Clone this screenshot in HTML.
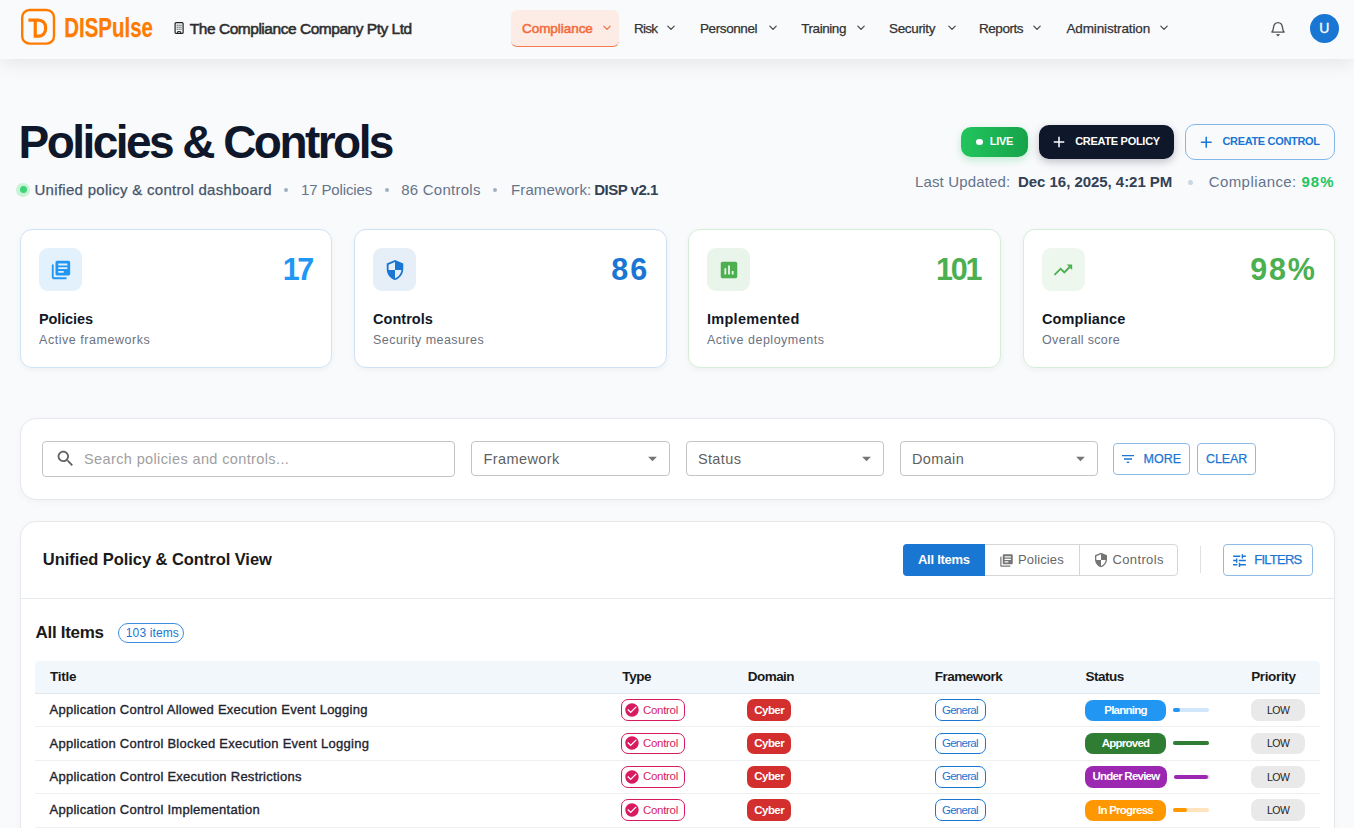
<!DOCTYPE html>
<html><head><meta charset="utf-8"><title>Policies &amp; Controls</title>
<style>
html,body{margin:0;padding:0;}
body{width:1354px;height:828px;overflow:hidden;position:relative;background:#f9fafc;font-family:"Liberation Sans",sans-serif;}
.t{position:absolute;white-space:nowrap;line-height:1;}
.b{position:absolute;box-sizing:border-box;}
.i{position:absolute;overflow:visible;}
</style></head><body>
<div class="b" style="left:0px;top:0px;width:1354.00px;height:59.00px;background:#f9fafc;box-shadow:0 4px 20px rgba(0,0,0,0.09);z-index:1"></div>
<div style="position:absolute;left:0;top:0;width:1354px;height:59px;z-index:2">
<svg class="i" style="left:21px;top:9px;width:35px;height:37px" viewBox="0 0 35 37">
<rect x="1.2" y="1.0" width="31.8" height="33.6" rx="7.4" fill="none" stroke="#ff7b00" stroke-width="2.4"/>
<path d="M7.4 11.05 H17.6 A7 7 0 0 1 24.6 18.05 V20.1 A7 7 0 0 1 17.6 27.1 H14.25 V11.05" fill="none" stroke="#ff7b00" stroke-width="3.2" stroke-linejoin="miter"/>
</svg>
<svg class="i" style="left:63px;top:10px;width:95px;height:34px" viewBox="0 0 95 34"><text x="1.3" y="27.4" font-family="Liberation Sans" font-weight="700" font-size="27.5" fill="#ff7b00" stroke="#ff7b00" stroke-width="0.25" textLength="88.6" lengthAdjust="spacingAndGlyphs">DISPulse</text></svg>
<svg class="i" style="left:174px;top:22px;width:10px;height:12px" viewBox="0 0 10 12">
<rect x="1.1" y="0.6" width="8" height="10.8" rx="1" fill="none" stroke="#222" stroke-width="1.2"/>
<g fill="#333"><circle cx="3.2" cy="3.2" r=".6"/><circle cx="5.1" cy="3.2" r=".6"/><circle cx="7" cy="3.2" r=".6"/>
<circle cx="3.2" cy="5.2" r=".6"/><circle cx="5.1" cy="5.2" r=".6"/><circle cx="7" cy="5.2" r=".6"/>
<circle cx="3.2" cy="7.2" r=".6"/><circle cx="5.1" cy="7.2" r=".6"/><circle cx="7" cy="7.2" r=".6"/></g>
<path d="M3.6 11 V9.6 H6.6 V11" fill="none" stroke="#222" stroke-width="1"/>
</svg>
<div class="t" style="left:189.80px;top:20.88px;font-size:15.5px;font-weight:400;color:#2e2e2e;letter-spacing:-0.47px;-webkit-text-stroke:0.55px currentColor;">The Compliance Company Pty Ltd</div>
<div class="b" style="left:511px;top:10px;width:108.00px;height:37.00px;background:#fdece6;border-bottom:1.5px solid #f57c4f;border-radius:6px"></div>
<div class="t" style="left:522.00px;top:21.76px;font-size:13.5px;font-weight:400;color:#f26d3d;letter-spacing:-0.05px;-webkit-text-stroke:0.55px currentColor;">Compliance</div>
<svg class="i" style="left:602.5px;top:25px;width:8px;height:6px" viewBox="0 0 8 6"><path d="M0.8 1.2 L4 4.4 L7.2 1.2" fill="none" stroke="#f26d3d" stroke-width="1.2" stroke-linecap="round" stroke-linejoin="round"/></svg>
<div class="t" style="left:634.00px;top:21.76px;font-size:13.5px;font-weight:400;color:#333;letter-spacing:-0.75px;-webkit-text-stroke:0.25px currentColor;">Risk</div>
<svg class="i" style="left:667.1px;top:25px;width:8px;height:6px" viewBox="0 0 8 6"><path d="M0.8 1.2 L4 4.4 L7.2 1.2" fill="none" stroke="#444" stroke-width="1.2" stroke-linecap="round" stroke-linejoin="round"/></svg>
<div class="t" style="left:700.00px;top:21.76px;font-size:13.5px;font-weight:400;color:#333;letter-spacing:-0.4px;-webkit-text-stroke:0.25px currentColor;">Personnel</div>
<svg class="i" style="left:768.8px;top:25px;width:8px;height:6px" viewBox="0 0 8 6"><path d="M0.8 1.2 L4 4.4 L7.2 1.2" fill="none" stroke="#444" stroke-width="1.2" stroke-linecap="round" stroke-linejoin="round"/></svg>
<div class="t" style="left:801.20px;top:21.76px;font-size:13.5px;font-weight:400;color:#333;letter-spacing:-0.43px;-webkit-text-stroke:0.25px currentColor;">Training</div>
<svg class="i" style="left:856.8px;top:25px;width:8px;height:6px" viewBox="0 0 8 6"><path d="M0.8 1.2 L4 4.4 L7.2 1.2" fill="none" stroke="#444" stroke-width="1.2" stroke-linecap="round" stroke-linejoin="round"/></svg>
<div class="t" style="left:889.00px;top:21.76px;font-size:13.5px;font-weight:400;color:#333;letter-spacing:-0.33px;-webkit-text-stroke:0.25px currentColor;">Security</div>
<svg class="i" style="left:947.5px;top:25px;width:8px;height:6px" viewBox="0 0 8 6"><path d="M0.8 1.2 L4 4.4 L7.2 1.2" fill="none" stroke="#444" stroke-width="1.2" stroke-linecap="round" stroke-linejoin="round"/></svg>
<div class="t" style="left:979.00px;top:21.76px;font-size:13.5px;font-weight:400;color:#333;letter-spacing:-0.45px;-webkit-text-stroke:0.25px currentColor;">Reports</div>
<svg class="i" style="left:1033.3px;top:25px;width:8px;height:6px" viewBox="0 0 8 6"><path d="M0.8 1.2 L4 4.4 L7.2 1.2" fill="none" stroke="#444" stroke-width="1.2" stroke-linecap="round" stroke-linejoin="round"/></svg>
<div class="t" style="left:1066.40px;top:21.76px;font-size:13.5px;font-weight:400;color:#333;letter-spacing:-0.13px;-webkit-text-stroke:0.25px currentColor;">Administration</div>
<svg class="i" style="left:1159.5px;top:25px;width:8px;height:6px" viewBox="0 0 8 6"><path d="M0.8 1.2 L4 4.4 L7.2 1.2" fill="none" stroke="#444" stroke-width="1.2" stroke-linecap="round" stroke-linejoin="round"/></svg>
<svg class="i" style="left:1270px;top:20px;width:16px;height:18px" viewBox="0 0 16 18">
<path d="M1.9 12.1 C2.9 11.3 3.2 10 3.4 8 C3.7 4.5 5.3 2.6 8 2.6 C10.7 2.6 12.3 4.5 12.6 8 C12.8 10 13.1 11.3 14.1 12.1 Z" fill="none" stroke="#555" stroke-width="1.4" stroke-linejoin="round"/>
<path d="M6.9 14.6 L8 15.6 L9.1 14.6" fill="none" stroke="#555" stroke-width="1.3" stroke-linecap="round"/>
</svg>
<div class="b" style="left:1309.5px;top:13.5px;width:29.00px;height:29.00px;background:#1976d2;border-radius:50%"></div>
<div class="t" style="left:1319.30px;top:21.24px;font-size:14px;font-weight:400;color:#fff;-webkit-text-stroke:0.35px #fff;">U</div>
</div>
<div class="t" style="left:18.60px;top:118.66px;font-size:46px;font-weight:700;color:#0f172a;letter-spacing:-2.55px;">Policies &amp; Controls</div>
<div class="b" style="left:16.3px;top:182.5px;width:14.00px;height:14.00px;background:#c9f3d5;border-radius:50%"></div>
<div class="b" style="left:19.8px;top:186px;width:7.00px;height:7.00px;background:#3fd47a;border-radius:50%"></div>
<div class="t" style="left:34.50px;top:182.30px;font-size:15px;font-weight:400;color:#475569;letter-spacing:0.29px;-webkit-text-stroke:0.25px currentColor;">Unified policy &amp; control dashboard</div>
<div class="b" style="left:284.3px;top:188px;width:4.00px;height:4.00px;background:#a3afbf;border-radius:50%"></div>
<div class="b" style="left:384.6px;top:188px;width:4.00px;height:4.00px;background:#a3afbf;border-radius:50%"></div>
<div class="b" style="left:493.3px;top:188px;width:4.00px;height:4.00px;background:#a3afbf;border-radius:50%"></div>
<div class="t" style="left:301.00px;top:182.30px;font-size:15px;font-weight:400;color:#64748b;letter-spacing:-0.14px;">17 Policies</div>
<div class="t" style="left:401.20px;top:182.30px;font-size:15px;font-weight:400;color:#64748b;letter-spacing:0.25px;">86 Controls</div>
<div class="t" style="left:511.00px;top:182.30px;font-size:15px;font-weight:400;color:#64748b;letter-spacing:0.12px;">Framework:</div>
<div class="t" style="left:594.20px;top:182.30px;font-size:15px;font-weight:700;color:#334155;letter-spacing:-0.5px;">DISP v2.1</div>
<div class="b" style="left:961px;top:127px;width:67.00px;height:30.00px;background:linear-gradient(90deg,#22c55e,#16a34a);border-radius:10px;box-shadow:0 3px 8px rgba(34,197,94,0.28)"></div>
<div class="b" style="left:976.3px;top:138.8px;width:6.50px;height:6.50px;background:#fff;border-radius:50%"></div>
<div class="t" style="left:989.70px;top:136.06px;font-size:11px;font-weight:700;color:#fff;letter-spacing:-0.25px;">LIVE</div>
<div class="b" style="left:1039px;top:125px;width:135.00px;height:34.00px;background:#0f172a;border-radius:10px;box-shadow:0 3px 8px rgba(15,23,42,0.25)"></div>
<svg class="i" style="left:1049.85px;top:133.15px;width:18px;height:18px" viewBox="0 0 24 24"><path fill="#fff" d="M19 13h-6v6h-2v-6H5v-2h6V5h2v6h6v2z"/></svg>
<div class="t" style="left:1075.20px;top:136.16px;font-size:11px;font-weight:700;color:#fff;letter-spacing:-0.29px;">CREATE POLICY</div>
<div class="b" style="left:1185px;top:124px;width:150.00px;height:36.00px;border:1px solid #85b6ea;border-radius:10px"></div>
<svg class="i" style="left:1196.75px;top:132.75px;width:18.5px;height:18.5px" viewBox="0 0 24 24"><path fill="#1976d2" d="M19 13h-6v6h-2v-6H5v-2h6V5h2v6h6v2z"/></svg>
<div class="t" style="left:1222.50px;top:136.06px;font-size:11px;font-weight:700;color:#1976d2;letter-spacing:-0.34px;">CREATE CONTROL</div>
<div class="t" style="left:915.00px;top:174.10px;font-size:15px;font-weight:400;color:#64748b;letter-spacing:0.14px;">Last Updated:</div>
<div class="t" style="left:1018.00px;top:174.10px;font-size:15px;font-weight:700;color:#334155;letter-spacing:-0.04px;">Dec 16, 2025, 4:21 PM</div>
<div class="b" style="left:1187.7px;top:179.8px;width:5.00px;height:5.00px;background:#cbd5e1;border-radius:50%"></div>
<div class="t" style="left:1208.70px;top:174.10px;font-size:15px;font-weight:400;color:#64748b;letter-spacing:0.42px;">Compliance:</div>
<div class="t" style="left:1301.50px;top:174.10px;font-size:15px;font-weight:700;color:#22c55e;letter-spacing:1.0px;">98%</div>
<div class="b" style="left:20px;top:229px;width:312.00px;height:139.00px;background:#fff;border:1px solid #cfe4f8;border-radius:12px;box-shadow:0 2px 6px rgba(0,0,0,0.045)"></div>
<div class="b" style="left:39px;top:248px;width:43.00px;height:43.00px;background:#e3f1fd;border-radius:9px"></div>
<svg class="i" style="left:49.50px;top:258.50px;width:22px;height:22px" viewBox="0 0 24 24"><path fill="#2196f3" d="M4 6H2v14c0 1.1.9 2 2 2h14v-2H4V6zm16-4H8c-1.1 0-2 .9-2 2v12c0 1.1.9 2 2 2h12c1.1 0 2-.9 2-2V4c0-1.1-.9-2-2-2zm-1 9H9V9h10v2zm-4 4H9v-2h6v2zm4-8H9V5h10v2z"/></svg>
<div class="t" style="right:1039.90px;top:254.38px;font-size:30.5px;font-weight:700;color:#2196f3;letter-spacing:-2.6px;margin-right:2.6px">17</div>
<div class="t" style="left:39.00px;top:311.72px;font-size:14.5px;font-weight:700;color:#111827;letter-spacing:-0.12px;">Policies</div>
<div class="t" style="left:39.00px;top:333.80px;font-size:12.5px;font-weight:400;color:#6b7280;letter-spacing:0.54px;">Active frameworks</div>
<div class="b" style="left:354px;top:229px;width:313.00px;height:139.00px;background:#fff;border:1px solid #cfe0f3;border-radius:12px;box-shadow:0 2px 6px rgba(0,0,0,0.045)"></div>
<div class="b" style="left:373px;top:248px;width:43.00px;height:43.00px;background:#e6eef8;border-radius:9px"></div>
<svg class="i" style="left:383.50px;top:258.50px;width:22px;height:22px" viewBox="0 0 24 24"><path fill="#1976d2" d="M12 1 3 5v6c0 5.55 3.84 10.74 9 12 5.16-1.26 9-6.45 9-12V5l-9-4zm0 10.99h7c-.53 4.12-3.28 7.79-7 8.94V12H5V6.3l7-3.11v8.8z"/></svg>
<div class="t" style="right:706.70px;top:254.38px;font-size:30.5px;font-weight:700;color:#1976d2;letter-spacing:2.2px;margin-right:-2.2px">86</div>
<div class="t" style="left:373.00px;top:311.72px;font-size:14.5px;font-weight:700;color:#111827;letter-spacing:0.04px;">Controls</div>
<div class="t" style="left:373.00px;top:333.80px;font-size:12.5px;font-weight:400;color:#6b7280;letter-spacing:0.45px;">Security measures</div>
<div class="b" style="left:688px;top:229px;width:313.00px;height:139.00px;background:#fff;border:1px solid #d6edd7;border-radius:12px;box-shadow:0 2px 6px rgba(0,0,0,0.045)"></div>
<div class="b" style="left:707px;top:248px;width:43.00px;height:43.00px;background:#e9f5ea;border-radius:9px"></div>
<svg class="i" style="left:717.50px;top:258.50px;width:22px;height:22px" viewBox="0 0 24 24"><path fill="#4caf50" d="M19 3H5c-1.1 0-2 .9-2 2v14c0 1.1.9 2 2 2h14c1.1 0 2-.9 2-2V5c0-1.1-.9-2-2-2zM9 17H7v-7h2v7zm4 0h-2V7h2v10zm4 0h-2v-4h2v4z"/></svg>
<div class="t" style="right:371.60px;top:254.38px;font-size:30.5px;font-weight:700;color:#4caf50;letter-spacing:-2.3px;margin-right:2.3px">101</div>
<div class="t" style="left:707.00px;top:311.72px;font-size:14.5px;font-weight:700;color:#111827;letter-spacing:0.28px;">Implemented</div>
<div class="t" style="left:707.00px;top:333.80px;font-size:12.5px;font-weight:400;color:#6b7280;letter-spacing:0.5px;">Active deployments</div>
<div class="b" style="left:1023px;top:229px;width:312.00px;height:139.00px;background:#fff;border:1px solid #d6edd7;border-radius:12px;box-shadow:0 2px 6px rgba(0,0,0,0.045)"></div>
<div class="b" style="left:1042px;top:248px;width:43.00px;height:43.00px;background:#edf7ee;border-radius:9px"></div>
<svg class="i" style="left:1051.50px;top:258.50px;width:22px;height:22px" viewBox="0 0 24 24"><path fill="#4caf50" d="M16 6l2.29 2.29-4.88 4.88-4-4L2 16.59 3.41 18l6-6 4 4 6.3-6.29L22 12V6z"/></svg>
<div class="t" style="right:39.00px;top:254.38px;font-size:30.5px;font-weight:700;color:#4caf50;letter-spacing:1.8px;margin-right:-1.8px">98%</div>
<div class="t" style="left:1042.00px;top:311.72px;font-size:14.5px;font-weight:700;color:#111827;letter-spacing:0.12px;">Compliance</div>
<div class="t" style="left:1042.00px;top:333.80px;font-size:12.5px;font-weight:400;color:#6b7280;letter-spacing:0.33px;">Overall score</div>
<div class="b" style="left:20px;top:418px;width:1315.00px;height:82.00px;background:#fff;border:1px solid #e6e8eb;border-radius:16px;box-shadow:0 2px 6px rgba(0,0,0,0.035)"></div>
<div class="b" style="left:42.2px;top:441.1px;width:413.30px;height:35.60px;border:1px solid #c4c4c4;border-radius:4px"></div>
<svg class="i" style="left:55.00px;top:448.00px;width:21px;height:21px" viewBox="0 0 24 24"><path fill="#616161" d="M15.5 14h-.79l-.28-.27C15.41 12.59 16 11.11 16 9.5 16 5.91 13.09 3 9.5 3S3 5.91 3 9.5 5.91 16 9.5 16c1.61 0 3.09-.59 4.23-1.57l.27.28v.79l5 4.99L20.49 19l-4.99-5zm-6 0C7.01 14 5 11.99 5 9.5S7.01 5 9.5 5 14 7.01 14 9.5 11.99 14 9.5 14z"/></svg>
<div class="t" style="left:84.00px;top:451.52px;font-size:14.5px;font-weight:400;color:#a0a0a0;letter-spacing:0.38px;">Search policies and controls...</div>
<div class="b" style="left:471.2px;top:441.2px;width:198.50px;height:35.20px;border:1px solid #c4c4c4;border-radius:4px"></div>
<div class="t" style="left:483.60px;top:451.52px;font-size:14.5px;font-weight:400;color:#5f5f5f;letter-spacing:0.38px;">Framework</div>
<svg class="i" style="left:642.15px;top:448.30px;width:21px;height:21px" viewBox="0 0 24 24"><path fill="#757575" d="M7 10l5 5 5-5z"/></svg>
<div class="b" style="left:685.5px;top:441.2px;width:198.50px;height:35.20px;border:1px solid #c4c4c4;border-radius:4px"></div>
<div class="t" style="left:697.90px;top:451.52px;font-size:14.5px;font-weight:400;color:#5f5f5f;letter-spacing:0.38px;">Status</div>
<svg class="i" style="left:856.45px;top:448.30px;width:21px;height:21px" viewBox="0 0 24 24"><path fill="#757575" d="M7 10l5 5 5-5z"/></svg>
<div class="b" style="left:899.5px;top:441.2px;width:198.50px;height:35.20px;border:1px solid #c4c4c4;border-radius:4px"></div>
<div class="t" style="left:911.90px;top:451.52px;font-size:14.5px;font-weight:400;color:#5f5f5f;letter-spacing:0.38px;">Domain</div>
<svg class="i" style="left:1070.45px;top:448.30px;width:21px;height:21px" viewBox="0 0 24 24"><path fill="#757575" d="M7 10l5 5 5-5z"/></svg>
<div class="b" style="left:1113.2px;top:443.3px;width:76.40px;height:31.30px;border:1px solid #8fbbe8;border-radius:4px"></div>
<svg class="i" style="left:1120.10px;top:450.90px;width:16px;height:16px" viewBox="0 0 24 24"><path fill="#1976d2" d="M10 18h4v-2h-4v2zM3 6v2h18V6H3zm3 7h12v-2H6v2z"/></svg>
<div class="t" style="left:1143.50px;top:453.10px;font-size:12.5px;font-weight:400;color:#1976d2;-webkit-text-stroke:0.25px currentColor;">MORE</div>
<div class="b" style="left:1197.4px;top:443.3px;width:58.40px;height:31.30px;border:1px solid #8fbbe8;border-radius:4px"></div>
<div class="t" style="left:1206.00px;top:453.10px;font-size:12.5px;font-weight:400;color:#1976d2;letter-spacing:-0.12px;-webkit-text-stroke:0.25px currentColor;">CLEAR</div>
<div class="b" style="left:20px;top:521px;width:1315.00px;height:379.00px;background:#fff;border:1px solid #e6e8eb;border-radius:16px;box-shadow:0 2px 6px rgba(0,0,0,0.035)"></div>
<div class="t" style="left:42.80px;top:550.94px;font-size:16.5px;font-weight:700;color:#1a1a1a;letter-spacing:-0.06px;">Unified Policy &amp; Control View</div>
<div class="b" style="left:903.1px;top:543.9px;width:274.60px;height:31.70px;border:1px solid #d6d6d6;border-radius:4px"></div>
<div class="b" style="left:903.1px;top:543.9px;width:81.70px;height:31.70px;background:#1976d2;border-radius:4px 0 0 4px"></div>
<div class="b" style="left:1078.8px;top:543.9px;width:1.00px;height:31.70px;background:#d6d6d6"></div>
<div class="t" style="left:918.00px;top:552.88px;font-size:13px;font-weight:700;color:#fff;letter-spacing:-0.27px;">All Items</div>
<svg class="i" style="left:999.30px;top:552.50px;width:15px;height:15px" viewBox="0 0 24 24"><path fill="#757575" d="M4 6H2v14c0 1.1.9 2 2 2h14v-2H4V6zm16-4H8c-1.1 0-2 .9-2 2v12c0 1.1.9 2 2 2h12c1.1 0 2-.9 2-2V4c0-1.1-.9-2-2-2zm-1 9H9V9h10v2zm-4 4H9v-2h6v2zm4-8H9V5h10v2z"/></svg>
<div class="t" style="left:1018.00px;top:552.88px;font-size:13px;font-weight:400;color:#666;letter-spacing:0.12px;">Policies</div>
<svg class="i" style="left:1093.20px;top:552.20px;width:16px;height:16px" viewBox="0 0 24 24"><path fill="#757575" d="M12 1 3 5v6c0 5.55 3.84 10.74 9 12 5.16-1.26 9-6.45 9-12V5l-9-4zm0 10.99h7c-.53 4.12-3.28 7.79-7 8.94V12H5V6.3l7-3.11v8.8z"/></svg>
<div class="t" style="left:1112.50px;top:552.88px;font-size:13px;font-weight:400;color:#666;letter-spacing:0.36px;">Controls</div>
<div class="b" style="left:1200.3px;top:546.1px;width:1.00px;height:27.30px;background:#e0e0e0"></div>
<div class="b" style="left:1223.2px;top:544.2px;width:89.50px;height:31.50px;border:1px solid #8fbbe8;border-radius:4px"></div>
<svg class="i" style="left:1230.60px;top:551.80px;width:17px;height:17px" viewBox="0 0 24 24"><path fill="#1976d2" d="M3 17v2h6v-2H3zM3 5v2h10V5H3zm10 16v-2h8v-2h-8v-2h-2v6h2zM7 9v2H3v2h4v2h2V9H7zm14 4v-2H11v2h10zm-6-4h2V7h4V5h-4V3h-2v6z"/></svg>
<div class="t" style="left:1254.20px;top:553.28px;font-size:13px;font-weight:400;color:#1976d2;letter-spacing:-0.74px;-webkit-text-stroke:0.25px currentColor;">FILTERS</div>
<div class="b" style="left:21px;top:597.5px;width:1313.00px;height:1.00px;background:#e6e8eb"></div>
<div class="t" style="left:35.50px;top:623.62px;font-size:17px;font-weight:700;color:#1a1a1a;letter-spacing:-0.3px;">All Items</div>
<div class="b" style="left:118.1px;top:623.3px;width:66.40px;height:20.20px;border:1px solid #3b8de0;border-radius:10px"></div>
<div class="t" style="left:125.80px;top:626.92px;font-size:12px;font-weight:400;color:#1976d2;letter-spacing:0.13px;">103 items</div>
<div class="b" style="left:35px;top:661px;width:1285.00px;height:32.50px;background:#f2f7fb;border-bottom:1px solid #e2e8ee;border-radius:4px 4px 0 0"></div>
<div class="t" style="left:50.00px;top:669.76px;font-size:13.5px;font-weight:700;color:#1a1a1a;letter-spacing:-0.28px;">Title</div>
<div class="t" style="left:622.30px;top:669.76px;font-size:13.5px;font-weight:700;color:#1a1a1a;letter-spacing:-0.41px;">Type</div>
<div class="t" style="left:747.80px;top:669.76px;font-size:13.5px;font-weight:700;color:#1a1a1a;letter-spacing:-0.55px;">Domain</div>
<div class="t" style="left:934.80px;top:669.76px;font-size:13.5px;font-weight:700;color:#1a1a1a;letter-spacing:-0.5px;">Framework</div>
<div class="t" style="left:1085.40px;top:669.76px;font-size:13.5px;font-weight:700;color:#1a1a1a;letter-spacing:-0.46px;">Status</div>
<div class="t" style="left:1251.20px;top:669.76px;font-size:13.5px;font-weight:700;color:#1a1a1a;letter-spacing:-0.36px;">Priority</div>
<div class="b" style="left:35px;top:726.2px;width:1285.00px;height:1.00px;background:#efefef"></div>
<div class="t" style="left:49.50px;top:703.48px;font-size:13px;font-weight:400;color:#1f2430;letter-spacing:0.26px;-webkit-text-stroke:0.35px currentColor;">Application Control Allowed Execution Event Logging</div>
<div class="b" style="left:621.1px;top:699.3000000000001px;width:63.50px;height:21.50px;border:1px solid #d81b60;border-radius:7px"></div>
<svg class="i" style="left:624.10px;top:702.20px;width:16px;height:16px" viewBox="0 0 24 24"><path fill="#d81b60" d="M12 2C6.48 2 2 6.48 2 12s4.48 10 10 10 10-4.48 10-10S17.52 2 12 2zm-2 15-5-5 1.41-1.41L10 14.17l7.59-7.59L19 8l-9 9z"/></svg>
<div class="t" style="left:643.00px;top:704.64px;font-size:11.5px;font-weight:400;color:#d81b60;letter-spacing:-0.3px;">Control</div>
<div class="b" style="left:747.1px;top:699.3000000000001px;width:43.90px;height:21.50px;background:#d32f2f;border-radius:7px"></div>
<div class="t" style="left:754.30px;top:704.64px;font-size:11.5px;font-weight:700;color:#fff;letter-spacing:-0.56px;">Cyber</div>
<div class="b" style="left:935.1px;top:699.3000000000001px;width:50.70px;height:21.50px;border:1px solid #1976d2;border-radius:7px"></div>
<div class="t" style="left:942.00px;top:704.64px;font-size:11.5px;font-weight:400;color:#1976d2;letter-spacing:-0.74px;">General</div>
<div class="b" style="left:1085px;top:699.50px;width:81.00px;height:21.4px;background:#2196f3;border-radius:8px;color:#fff;font-size:11.5px;font-weight:700;line-height:21.4px;text-align:center;letter-spacing:-0.75px;white-space:nowrap">Planning</div>
<div class="b" style="left:1173.0px;top:708.0px;width:36.00px;height:4.00px;background:#cfe6fb;border-radius:2px"></div>
<div class="b" style="left:1173.0px;top:708.0px;width:7.20px;height:4.00px;background:#2196f3;border-radius:2px"></div>
<div class="b" style="left:1251px;top:699.3000000000001px;width:53.80px;height:21.90px;background:#e9e9e9;border-radius:8px"></div>
<div class="t" style="left:1267.00px;top:705.28px;font-size:10.5px;font-weight:400;color:#1f1f1f;letter-spacing:-0.55px;">LOW</div>
<div class="b" style="left:35px;top:759.8px;width:1285.00px;height:1.00px;background:#efefef"></div>
<div class="t" style="left:49.50px;top:736.68px;font-size:13px;font-weight:400;color:#1f2430;letter-spacing:0.26px;-webkit-text-stroke:0.35px currentColor;">Application Control Blocked Execution Event Logging</div>
<div class="b" style="left:621.1px;top:732.5000000000001px;width:63.50px;height:21.50px;border:1px solid #d81b60;border-radius:7px"></div>
<svg class="i" style="left:624.10px;top:735.40px;width:16px;height:16px" viewBox="0 0 24 24"><path fill="#d81b60" d="M12 2C6.48 2 2 6.48 2 12s4.48 10 10 10 10-4.48 10-10S17.52 2 12 2zm-2 15-5-5 1.41-1.41L10 14.17l7.59-7.59L19 8l-9 9z"/></svg>
<div class="t" style="left:643.00px;top:737.84px;font-size:11.5px;font-weight:400;color:#d81b60;letter-spacing:-0.3px;">Control</div>
<div class="b" style="left:747.1px;top:732.5000000000001px;width:43.90px;height:21.50px;background:#d32f2f;border-radius:7px"></div>
<div class="t" style="left:754.30px;top:737.84px;font-size:11.5px;font-weight:700;color:#fff;letter-spacing:-0.56px;">Cyber</div>
<div class="b" style="left:935.1px;top:732.5000000000001px;width:50.70px;height:21.50px;border:1px solid #1976d2;border-radius:7px"></div>
<div class="t" style="left:942.00px;top:737.84px;font-size:11.5px;font-weight:400;color:#1976d2;letter-spacing:-0.74px;">General</div>
<div class="b" style="left:1085px;top:732.70px;width:81.00px;height:21.4px;background:#2e7d32;border-radius:8px;color:#fff;font-size:11.5px;font-weight:700;line-height:21.4px;text-align:center;letter-spacing:-0.75px;white-space:nowrap">Approved</div>
<div class="b" style="left:1173.0px;top:741.2px;width:36.00px;height:4.00px;background:#c8e6c9;border-radius:2px"></div>
<div class="b" style="left:1173.0px;top:741.2px;width:36.00px;height:4.00px;background:#2e7d32;border-radius:2px"></div>
<div class="b" style="left:1251px;top:732.5000000000001px;width:53.80px;height:21.90px;background:#e9e9e9;border-radius:8px"></div>
<div class="t" style="left:1267.00px;top:738.48px;font-size:10.5px;font-weight:400;color:#1f1f1f;letter-spacing:-0.55px;">LOW</div>
<div class="b" style="left:35px;top:793.0px;width:1285.00px;height:1.00px;background:#efefef"></div>
<div class="t" style="left:49.50px;top:770.28px;font-size:13px;font-weight:400;color:#1f2430;letter-spacing:0.26px;-webkit-text-stroke:0.35px currentColor;">Application Control Execution Restrictions</div>
<div class="b" style="left:621.1px;top:766.1px;width:63.50px;height:21.50px;border:1px solid #d81b60;border-radius:7px"></div>
<svg class="i" style="left:624.10px;top:769.00px;width:16px;height:16px" viewBox="0 0 24 24"><path fill="#d81b60" d="M12 2C6.48 2 2 6.48 2 12s4.48 10 10 10 10-4.48 10-10S17.52 2 12 2zm-2 15-5-5 1.41-1.41L10 14.17l7.59-7.59L19 8l-9 9z"/></svg>
<div class="t" style="left:643.00px;top:771.44px;font-size:11.5px;font-weight:400;color:#d81b60;letter-spacing:-0.3px;">Control</div>
<div class="b" style="left:747.1px;top:766.1px;width:43.90px;height:21.50px;background:#d32f2f;border-radius:7px"></div>
<div class="t" style="left:754.30px;top:771.44px;font-size:11.5px;font-weight:700;color:#fff;letter-spacing:-0.56px;">Cyber</div>
<div class="b" style="left:935.1px;top:766.1px;width:50.70px;height:21.50px;border:1px solid #1976d2;border-radius:7px"></div>
<div class="t" style="left:942.00px;top:771.44px;font-size:11.5px;font-weight:400;color:#1976d2;letter-spacing:-0.74px;">General</div>
<div class="b" style="left:1085px;top:766.30px;width:81.90px;height:21.4px;background:#9c27b0;border-radius:8px;color:#fff;font-size:11.5px;font-weight:700;line-height:21.4px;text-align:center;letter-spacing:-0.75px;white-space:nowrap">Under Review</div>
<div class="b" style="left:1173.9px;top:774.8px;width:36.00px;height:4.00px;background:#ead0ef;border-radius:2px"></div>
<div class="b" style="left:1173.9px;top:774.8px;width:34.20px;height:4.00px;background:#9c27b0;border-radius:2px"></div>
<div class="b" style="left:1251px;top:766.1px;width:53.80px;height:21.90px;background:#e9e9e9;border-radius:8px"></div>
<div class="t" style="left:1267.00px;top:772.08px;font-size:10.5px;font-weight:400;color:#1f1f1f;letter-spacing:-0.55px;">LOW</div>
<div class="b" style="left:35px;top:827.1px;width:1285.00px;height:1.00px;background:#efefef"></div>
<div class="t" style="left:49.50px;top:803.48px;font-size:13px;font-weight:400;color:#1f2430;letter-spacing:0.26px;-webkit-text-stroke:0.35px currentColor;">Application Control Implementation</div>
<div class="b" style="left:621.1px;top:799.3000000000001px;width:63.50px;height:21.50px;border:1px solid #d81b60;border-radius:7px"></div>
<svg class="i" style="left:624.10px;top:802.20px;width:16px;height:16px" viewBox="0 0 24 24"><path fill="#d81b60" d="M12 2C6.48 2 2 6.48 2 12s4.48 10 10 10 10-4.48 10-10S17.52 2 12 2zm-2 15-5-5 1.41-1.41L10 14.17l7.59-7.59L19 8l-9 9z"/></svg>
<div class="t" style="left:643.00px;top:804.64px;font-size:11.5px;font-weight:400;color:#d81b60;letter-spacing:-0.3px;">Control</div>
<div class="b" style="left:747.1px;top:799.3000000000001px;width:43.90px;height:21.50px;background:#d32f2f;border-radius:7px"></div>
<div class="t" style="left:754.30px;top:804.64px;font-size:11.5px;font-weight:700;color:#fff;letter-spacing:-0.56px;">Cyber</div>
<div class="b" style="left:935.1px;top:799.3000000000001px;width:50.70px;height:21.50px;border:1px solid #1976d2;border-radius:7px"></div>
<div class="t" style="left:942.00px;top:804.64px;font-size:11.5px;font-weight:400;color:#1976d2;letter-spacing:-0.74px;">General</div>
<div class="b" style="left:1085px;top:799.50px;width:81.00px;height:21.4px;background:#ff9800;border-radius:8px;color:#fff;font-size:11.5px;font-weight:700;line-height:21.4px;text-align:center;letter-spacing:-0.75px;white-space:nowrap">In Progress</div>
<div class="b" style="left:1173.0px;top:808.0px;width:36.00px;height:4.00px;background:#ffe3bf;border-radius:2px"></div>
<div class="b" style="left:1173.0px;top:808.0px;width:14.40px;height:4.00px;background:#ff9800;border-radius:2px"></div>
<div class="b" style="left:1251px;top:799.3000000000001px;width:53.80px;height:21.90px;background:#e9e9e9;border-radius:8px"></div>
<div class="t" style="left:1267.00px;top:805.28px;font-size:10.5px;font-weight:400;color:#1f1f1f;letter-spacing:-0.55px;">LOW</div>
</body></html>
